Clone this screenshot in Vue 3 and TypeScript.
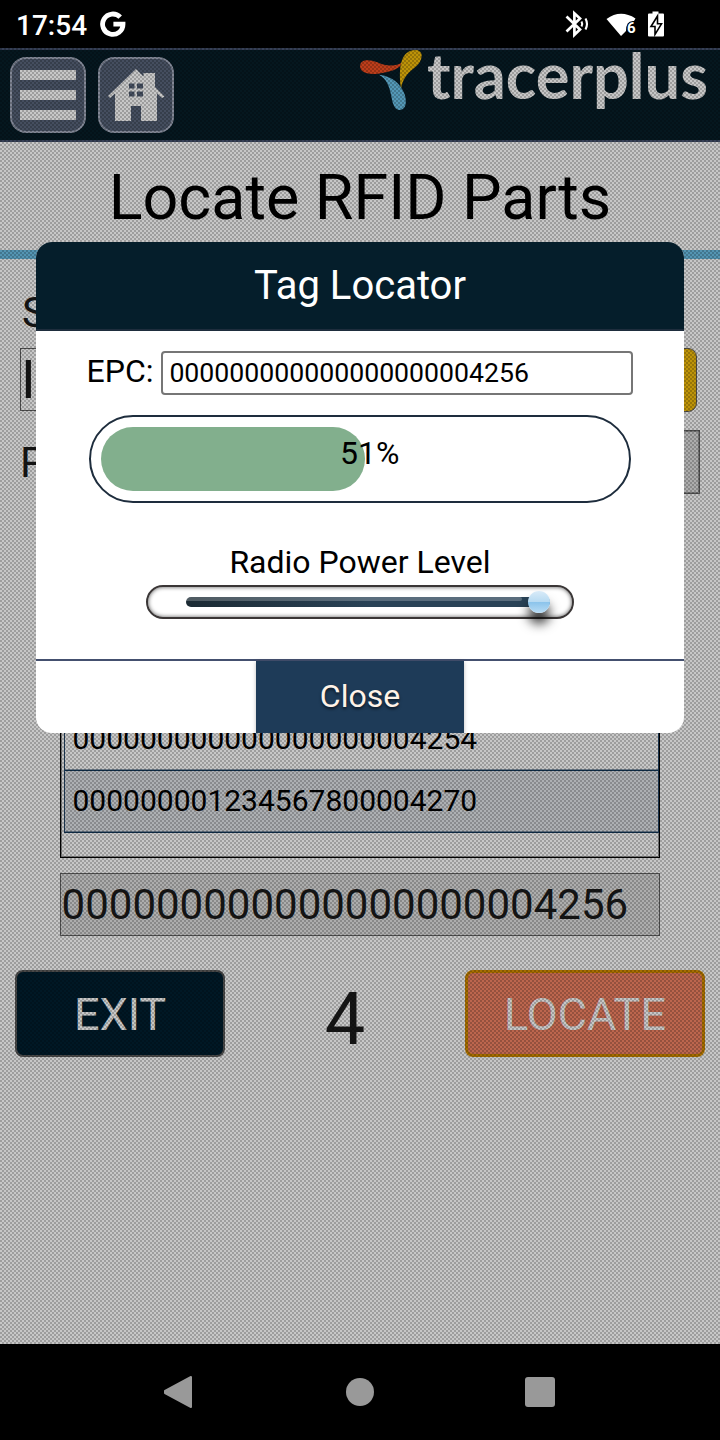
<script setup lang="ts">
const epc: string = '000000000000000000004256'
const rows: string[] = ['000000000000000000004254', '000000001234567800004270']
const level: number = 51
</script>

<template>
  <div class="phone">
    <header class="status">
      <span class="clock">17:54</span>
      <svg class="google" width="26" height="26" viewBox="0 0 26 26">
        <path d="M20.2 6.2A10.2 10.2 0 1 0 23 13.2H13.4" fill="none" stroke="#fff" stroke-width="4.8" />
      </svg>
      <svg class="signals" width="110" height="30" viewBox="0 0 110 30">
        <g fill="none" stroke="#fff" stroke-width="2.7">
          <path d="M6.5 6.5 20 19.500l-5.600 5.300V3.300L20 8.600 6.500 21.500" />
          <path d="M21.500 11.500q1.500 2.500 0 5M25.500 8.500q3 5.500 0 11" stroke-width="2.100" />
        </g>
        <path d="M46.500 9Q60.500-1 75.500 8.500L74 11Q66 10 66 21L61 26Z" fill="#fff" />
        <text x="67" y="22.500" class="six">6</text>
        <path d="M92.500 1.500h6v2h4.500a1 1 0 0 1 1 1v21a1 1 0 0 1-1 1H89a1 1 0 0 1-1-1v-21a1 1 0 0 1 1-1h3.500z" fill="#fff" />
        <path d="M97.500 6 91 16.500h4V24.500l6.500-10.700h-4z" fill="#fff" stroke="#000" stroke-width="1.600" />
      </svg>
    </header>

    <main class="app">
      <div class="toolbar">
        <button class="tool" aria-label="Menu">
          <svg width="72" height="72" viewBox="0 0 72 72"><path d="M8 11h56v10H8zM8 31h56v10H8zM8 51h56v10H8z" fill="#fff" /></svg>
        </button>
        <button class="tool" aria-label="Home">
          <svg width="72" height="72" viewBox="0 0 72 72">
            <path fill="#fff" fill-rule="evenodd" d="M36 10 43.500 17.500V14H55V28L64.500 37.500 62 39 57 34.500V62H41V47H31V62H15V34.500L10 39 8 37ZM29 24.500v5h5.500v-5ZM37 24.500v5h6v-5ZM29 32.500v5h5.500v-5ZM37 32.500v5h6v-5Z" />
          </svg>
        </button>
        <svg class="logo" width="360" height="84" viewBox="0 0 360 84">
          <g transform="translate(-10 -50) scale(.33333)">
            <path fill="#f25022" d="M163 184C142 199 113 202 82 187 55 176 30 179 30 199 32 221 59 224 84 221 118 216 146 211 163 184Z" />
            <path fill="#f2bd0c" d="M153 267C144 201 153 150 197 150 216 151 220 167 209 187 198 207 162 215 153 267Z" />
            <path fill="#6cc3ea" d="M87 224C113 238 120 265 126 299 131 323 140 330 151 330 170 328 170 303 164 283 152 251 126 228 87 224Z" />
          </g>
          <text x="67" y="49" textLength="281" lengthAdjust="spacingAndGlyphs" class="brand">tracerplus</text>
        </svg>
      </div>
      <h1>Locate RFID Parts</h1>

      <section class="form">
        <div class="label">S</div>
        <div class="line">
          <div class="box entry">I</div>
          <button class="scan" aria-label="Scan"></button>
        </div>
        <div class="line second">
          <span class="label">P</span>
          <div class="box part"></div>
        </div>
      </section>

      <div class="list">
        <div class="grid">
          <div v-for="(row, i) in rows" :key="row" class="row" :class="{ alt: i % 2 === 1 }">{{ row }}</div>
        </div>
      </div>
      <div class="box selected">{{ epc }}</div>
      <div class="actions">
        <button class="exit">EXIT</button>
        <span class="count">4</span>
        <button class="locate">LOCATE</button>
      </div>

      <div class="mask"></div>
      <div class="dialog">
        <h2>Tag Locator</h2>
        <div class="body">
          <div class="epc"><span>EPC:</span><div class="field">{{ epc }}</div></div>
          <div class="meter">
            <div class="fill" :style="{ width: level + '%' }"></div>
            <span class="percent">{{ level }}%</span>
          </div>
          <div class="power">Radio Power Level</div>
          <div class="slider"><div class="track"><div class="shine"></div><div class="thumb"></div></div></div>
        </div>
        <footer><button class="close">Close</button></footer>
      </div>
    </main>

    <nav>
      <svg width="30" height="34" viewBox="0 0 30 34"><path d="M2 16 28 2V32L2 18Z" fill="#999" stroke="#999" stroke-width="2" stroke-linejoin="round" /></svg>
      <i class="home"></i>
      <i class="recent"></i>
    </nav>
  </div>
</template>

<style>
body { margin: 0; background: #000; }
</style>

<style scoped>
* { box-sizing: border-box; }
button { padding: 0; margin: 0; font-family: inherit; }
.phone { width: 720px; height: 1440px; overflow: hidden; font-family: Roboto, sans-serif; background: #000; display: flex; flex-direction: column; }
.status { height: 48px; flex: none; display: flex; align-items: center; padding-left: 16px; color: #fff; }
.clock { font-size: 28px; font-weight: 500; line-height: 48px; width: 84px; padding-top: 3px; }
.google { margin-top: 0; }
.signals { margin-left: 434px; margin-top: 1px; }
.six { font: bold 15px Roboto, sans-serif; fill: #fff; }
.app { position: relative; height: 1296px; flex: none; background: #fff; }
.toolbar { height: 94px; background: #061d28; border-top: 2px solid #45526e; border-bottom: 2px solid #45526e; display: flex; padding: 7px 0 0 10px; }
.tool { width: 76px; height: 76px; border: 2px solid #a6adc0; border-radius: 16px; background: #58647a; margin-right: 12px; display: flex; }
.tool svg { display: block; }
.logo { margin: -7px 0 0 174px; display: block; overflow: visible; }
.brand { font: bold 64px Lato, sans-serif; fill: #fff; }
h1 { margin: 0; height: 117px; border-bottom: 9px solid #6bbfe6; text-align: center; font-weight: 400; font-size: 62.8px; line-height: 112px; color: #000; }
.form { height: 415px; padding: 30px 20px 0; color: #1c1c1c; }
.label { font-size: 42px; line-height: 48px; padding-left: 2px; }
.line { display: flex; justify-content: space-between; margin-top: 11px; }
.second { margin-top: 18px; }
.second .label { line-height: 65px; height: 64px; padding-left: 0; }
.box { border: 1px solid #666; height: 63px; }
.entry { width: 560px; font-size: 54px; line-height: 61px; }
.scan { width: 80px; height: 64px; margin-right: 3px; border: 1px solid #67635c; border-radius: 9px; background: #f4be0c; }
.part { width: 560px; height: 64px; border-width: 1px; box-shadow: inset 0 0 0 1px #6668; background: #dedede; }
.list { width: 600px; margin: 0 auto; height: 184px; border: 1px solid #000; box-shadow: inset 0 0 0 1px #0006; padding: 34px 1px 0 3px; }
.grid { width: 595px; border: solid #24476a; border-width: 0 1px; color: #000; }
.row { height: 62px; font-size: 30px; line-height: 59px; padding-left: 7.5px; border-bottom: 1px solid #123a5c; box-shadow: inset 0 -1px #24476a80; }
.alt { background: #dee1e6; }
.selected { width: 600px; margin: 15px auto 0; font-size: 42px; line-height: 61px; background: #dedede; color: #1c1c1c; padding-left: .6px; }
.actions { display: flex; justify-content: space-between; padding: 34px 15px 0; }
.exit, .locate { height: 87px; border-radius: 8px; font-size: 45px; line-height: 84px; color: #fff; padding-top: 1px; }
.exit { width: 210px; background: #001f30; border: 2px solid #5d5d5d; }
.locate { width: 240px; background: #f28364; border: 3px solid #d68d00; line-height: 82px; }
.count { font-size: 72px; line-height: 100px; color: #1c1c1c; }
.mask { position: absolute; inset: 0; background: repeating-conic-gradient(rgba(0,0,0,.22) 0 25%, rgba(0,0,0,.385) 0 50%) 0 0 / 4px 4px; }
.dialog { position: absolute; left: 36px; top: 194px; width: 648px; height: 491px; border-radius: 16px; overflow: hidden; background: #fff; color: #000; }
h2 { margin: 0; height: 89px; line-height: 87px; border-bottom: 2px solid #1e2d3d; background: #051e2b; color: #fff; text-align: center; font-weight: 400; font-size: 40px; }
.body { height: 328px; padding-top: 20px; }
.epc { display: flex; justify-content: space-between; padding: 0 51px 0 50.6px; font-size: 32px; line-height: 40px; }
.field { width: 472px; height: 44px; border: 2px solid #767676; border-radius: 4px; font-size: 26.667px; line-height: 40px; padding-left: 6.4px; }
.meter { position: relative; width: 542px; height: 88px; margin: 20px auto 0 53px; border: 2px solid #1e2d3d; border-radius: 44px; padding: 10px; }
.fill { height: 64px; border-radius: 32px; background: #82af8d; }
.percent { position: absolute; left: 249px; top: 18px; font-size: 32px; line-height: 37px; }
.power { margin-top: 40px; height: 42px; line-height: 38px; text-align: center; font-size: 32px; }
.slider { width: 428px; height: 34px; margin: 0 auto; border: 2px solid #3a3636; border-radius: 17px; box-shadow: inset 0 0 4px #555; padding: 10px 22px 0 38px; }
.track { position: relative; height: 10px; border-radius: 5px; background: linear-gradient(90deg, #1b2a33, #294256 50%, #294256); }
.shine { height: 4px; width: 336px; border-radius: 4px 2px 2px 0; background: rgba(255,255,255,.23); }
.thumb { position: absolute; right: 0; top: -6px; width: 22px; height: 22px; border-radius: 50%; background: linear-gradient(#d9ebf8, #b7daf2 49%, #8ac3eb 50%, #b9dcf4); box-shadow: 0 11px 11px #000b; }
footer { height: 74px; border-top: 2px solid #44506f; display: flex; justify-content: center; }
.close { width: 208px; height: 72px; border: 0; background: #1e3b58; color: #fff3e8; font-size: 32px; line-height: 70px; padding-bottom: 2px; box-shadow: 0 1px 4px #0004; text-shadow: 0 2px 3px #0009; }
nav { height: 96px; display: flex; align-items: center; padding-left: 163px; }
.home { width: 28px; height: 28px; border-radius: 50%; background: #999; margin-left: 153px; }
.recent { width: 30px; height: 30px; border-radius: 3px; background: #999; margin-left: 151px; }
</style>
